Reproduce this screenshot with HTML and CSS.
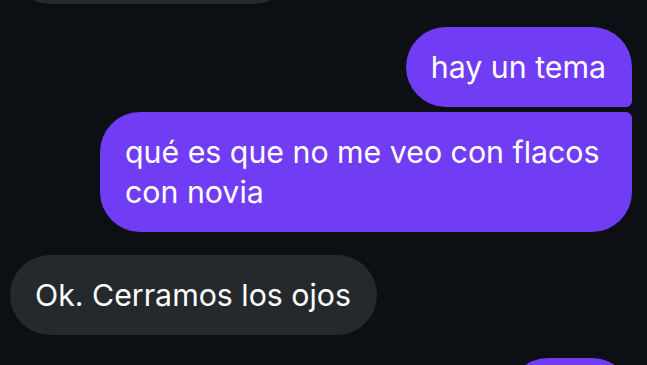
FILE: index.html
```html
<!DOCTYPE html>
<html lang="es">

<head>
    <meta charset="UTF-8">
    <meta name="viewport" content="width=device-width, initial-scale=1.0">
    <title>Chat</title>

    <link rel="stylesheet" href="styles.css">
</head>

<body>

    <div id="chat">
        <!-- previous message, scrolled mostly out of view -->
        <div class="msg received">
            <p class="bubble">Bueno, contame</p>
        </div>

        <div class="msg sent first">
            <p class="bubble">hay un tema</p>
        </div>
        <div class="msg sent last grouped">
            <p class="bubble">qué es que no me veo con flacos con novia</p>
        </div>

        <div class="msg received">
            <p class="bubble">Ok. Cerramos los ojos</p>
        </div>

        <div class="msg sent">
            <p class="bubble">jajaja</p>
        </div>
    </div>

</body>

</html>
```

FILE: styles.css
```css
body {
    margin: 0;
    height: 100vh;
    overflow: hidden;
    background-color: #0c1014;
    font-family: Inter, "Noto Sans", sans-serif;
}

#chat {
    display: flex;
    flex-direction: column;
    padding: 0 15px 0 10px;
    margin-top: -76px;
}

.msg {
    display: flex;
    margin-top: 23px;
}

.msg:first-child {
    margin-top: 0;
}

.msg.grouped {
    margin-top: 5px;
}

.sent {
    justify-content: flex-end;
}

.received {
    justify-content: flex-start;
}

.bubble {
    margin: 0;
    box-sizing: border-box;
    max-width: 532px;
    padding: 20px 26px 20px 25px;
    border-radius: 40px;
    font-size: 30.3px;
    line-height: 40px;
    color: #ffffff;
}

.sent .bubble {
    background-color: #713df4;
}

.received .bubble {
    background-color: #25292e;
}

.sent.first .bubble {
    border-bottom-right-radius: 6px;
}

.sent.last .bubble {
    border-top-right-radius: 6px;
}
```
